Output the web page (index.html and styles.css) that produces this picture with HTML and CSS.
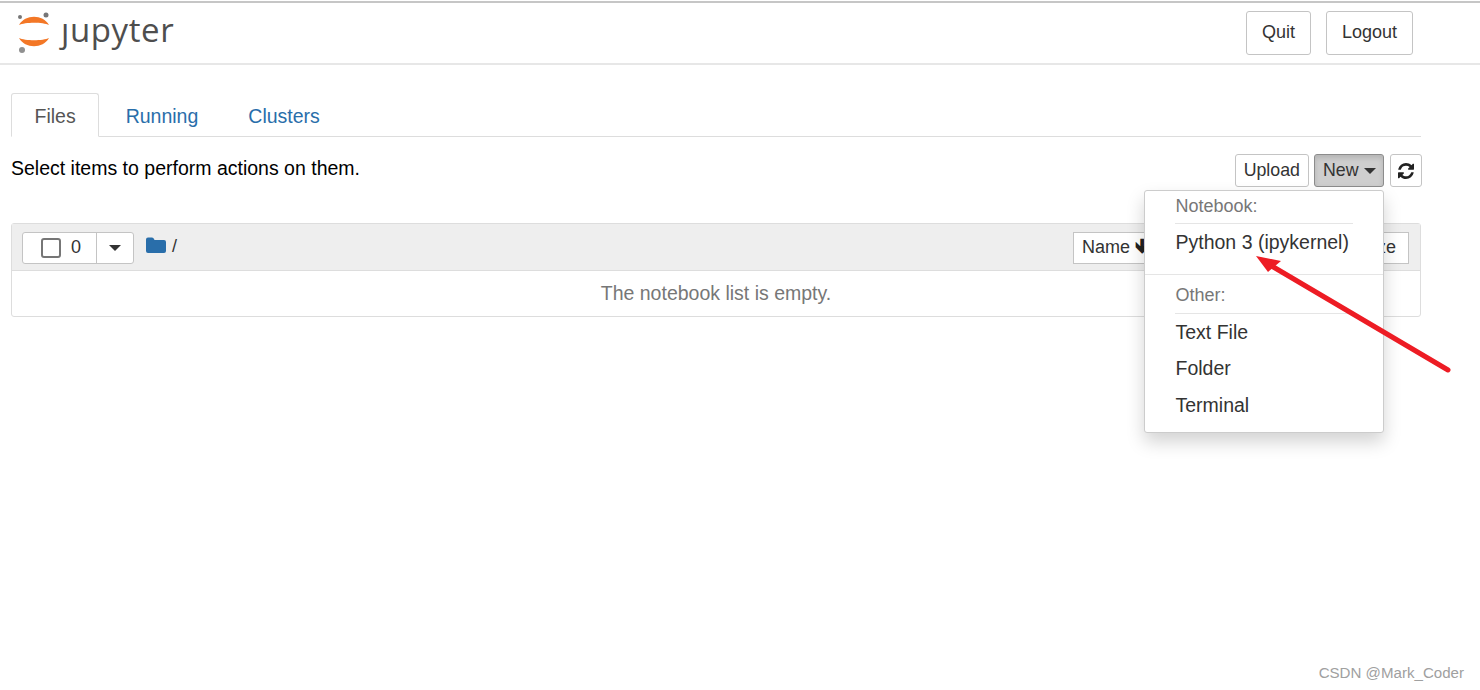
FILE: index.html
```html
<!DOCTYPE html>
<html lang="en">
<head>
    <meta charset="UTF-8">
    <meta name="viewport" content="width=device-width, initial-scale=1.0">
    <title>Home Page - Select or create a notebook</title>
    <link rel="stylesheet" href="styles.css">
</head>
<body>
    <header class="site-header">
        <div class="logo">
            <svg class="logo-mark" width="36" height="44" viewBox="0 0 36 44">
                <circle cx="3" cy="6" r="2" fill="#767677"/>
                <circle cx="29" cy="4" r="2.500" fill="#767677"/>
                <circle cx="5" cy="39" r="3" fill="#909090"/>
                <path d="M2 14 C8 3 26 3 32 14 C26 11 8 11 2 14Z" fill="#f37726"/>
                <path d="M2 27 C8 38 26 38 32 27 C26 30 8 30 2 27Z" fill="#f37726"/>
            </svg>
            <span class="logo-text">&#x237;upyter</span>
        </div>
        <div class="header-buttons">
            <button class="btn btn-header">Quit</button>
            <button class="btn btn-header">Logout</button>
        </div>
    </header>

    <main class="container">
        <nav class="tabs">
            <a class="tab active">Files</a>
            <a class="tab">Running</a>
            <a class="tab">Clusters</a>
        </nav>

        <div class="toolbar">
            <span class="toolbar-text">Select items to perform actions on them.</span>
            <div class="toolbar-buttons">
                <button class="btn btn-small">Upload</button>
                <button class="btn btn-small btn-new">New <span class="caret"></span></button>
                <button class="btn btn-small btn-refresh">
                    <svg width="16" height="16" viewBox="0 0 1536 1536">
                        <path fill="#222" d="M1511 928q0 5-1 7-64 268-268 434.500T764 1536q-146 0-282.500-55T238 1324l-129 129q-19 19-45 19t-45-19-19-45V960q0-26 19-45t45-19h448q26 0 45 19t19 45-19 45l-137 137q71 66 161 102t187 36q134 0 250-65t186-179q11-17 53-117 8-23 30-23h192q13 0 22.500 9.500t9.500 22.500zm25-800v448q0 26-19 45t-45 19h-448q-26 0-45-19t-19-45 19-45l138-138Q969 256 768 256q-134 0-250 65T332 500q-11 17-53 117-8 23-30 23H50q-13 0-22.500-9.500T18 608v-7q65-268 270-434.500T768 0q146 0 284 55.500T1297 212l130-129q19-19 45-19t45 19 19 45z"/>
                    </svg>
                </button>
            </div>
        </div>

        <section class="list">
            <div class="list-header">
                <div class="select-group">
                    <div class="select-box">
                        <span class="checkbox"></span>
                        <span class="count">0</span>
                    </div>
                    <div class="select-caret"><span class="caret"></span></div>
                </div>
                <svg class="folder" width="20" height="16" viewBox="0 0 20 16">
                    <path fill="#296eaa" d="M0 2.500Q0 .5 2 .5h4q1.500 0 2 1.500l.5 1H18q2 0 2 2V14q0 2-2 2H2q-2 0-2-2Z"/>
                </svg>
                <span class="crumb">/</span>
                <div class="sort-buttons">
                    <button class="sort-btn sort-name">Name <span class="sort-arrow">&#x1F87B;</span></button>
                    <button class="sort-btn sort-size">Size</button>
                </div>
            </div>
            <div class="list-empty">The notebook list is empty.</div>
        </section>
    </main>

    <div class="dropdown">
        <div class="dropdown-heading">Notebook:</div>
        <a class="dropdown-item item-first">Python 3 (ipykernel)</a>
        <div class="dropdown-divider"></div>
        <div class="dropdown-heading heading-other">Other:</div>
        <a class="dropdown-item">Text File</a>
        <a class="dropdown-item">Folder</a>
        <a class="dropdown-item">Terminal</a>
    </div>

    <!-- red annotation arrow on top of the menu -->
    <svg class="annotation" width="1480" height="690" viewBox="0 0 1480 690">
        <line x1="1448" y1="370" x2="1270" y2="265" stroke="#ed1c24" stroke-width="5" stroke-linecap="round"/>
        <polygon points="1256,256 1281,261 1268,272" fill="#ed1c24"/>
    </svg>

    <div class="watermark">CSDN @Mark_Coder</div>
</body>
</html>
```

FILE: styles.css
```css
* { box-sizing: border-box; }
html, body { height: 100%; }
body { margin: 0; font-family: "Liberation Sans", Arial, sans-serif; font-size: 19.5px; color: #000; background: #fff; overflow: hidden; }

.site-header { height: 64px; margin-top: 1px; border-top: 2px solid #c6c6c6; border-bottom: 2px solid #e7e7e7; padding: 0 67px 0 17px; display: flex; justify-content: space-between; align-items: flex-start; }
.logo { display: flex; align-items: flex-start; padding-top: 8px; }
.logo-mark { display: block; }
.logo-text { font-family: "Open Sans", "DejaVu Sans", sans-serif; font-size: 33px; line-height: 38px; color: #4e4e4e; margin-left: 8px; letter-spacing: 0.6px; }
.header-buttons { display: flex; gap: 15px; padding-top: 8px; }

.btn { font-family: inherit; color: #333; background: #fff; border: 1px solid #c4c4c4; border-radius: 3px; cursor: pointer; }
.btn-header { height: 44px; padding: 0 15px 2px; font-size: 18px; }
.btn-small { height: 33px; padding: 0 8px; font-size: 17.8px; }
.btn-new { width: 70px; background: #cecece; border-color: #8c8c8c; box-shadow: inset 0 3px 5px rgba(0,0,0,.125); white-space: nowrap; }
.btn-refresh { width: 32px; margin-left: 1px; padding: 0; display: flex; align-items: center; justify-content: center; }
.caret { display: inline-block; width: 0; height: 0; vertical-align: middle; border-top: 6px solid #333; border-left: 6px solid transparent; border-right: 6px solid transparent; }

.container { padding: 0 59px 0 11px; }

.tabs { display: flex; margin-top: 28px; height: 44px; border-bottom: 1px solid #ddd; }
.tab { height: 44px; padding: 0 22.5px; margin-right: 3px; line-height: 44px; color: #296eaa; border: 1px solid transparent; }
.tab.active { color: #555; background: #fff; border-color: #ddd; border-bottom-color: #fff; border-radius: 3px 3px 0 0; }

.toolbar { display: flex; justify-content: space-between; margin-top: 17px; height: 33px; margin-right: -1px; }
.toolbar-text { line-height: 28px; }
.toolbar-buttons { display: flex; gap: 5px; }

.list { margin-top: 36px; border: 1px solid #ddd; border-radius: 3px; }
.list-header { height: 47px; background: #eee; border-bottom: 1px solid #ddd; display: flex; align-items: flex-start; padding: 8px 11px 0 10px; }
.select-group { display: flex; width: 112px; height: 32px; background: #fff; border: 1px solid #c4c4c4; border-radius: 3px; }
.select-box { width: 74px; display: flex; align-items: center; padding-left: 18px; border-right: 1px solid #c4c4c4; }
.checkbox { width: 20px; height: 20px; border: 2px solid #767676; border-radius: 3px; background: #fff; }
.count { margin: -2px 0 0 10px; font-size: 18px; color: #333; }
.select-caret { flex: 1; display: flex; align-items: center; justify-content: center; }
.folder { margin: 5px 0 0 12px; }
.crumb { margin-left: 6px; line-height: 28px; color: #333; font-size: 18px; }
.sort-buttons { margin-left: auto; display: flex; }
.sort-btn { height: 32px; background: #fff; border: 1px solid #c4c4c4; font-family: inherit; font-size: 18px; line-height: 1; color: #333; padding: 0 8px 2px; white-space: nowrap; }
.sort-name { width: 84px; text-align: left; }
.sort-arrow { font-family: "DejaVu Sans", sans-serif; font-weight: bold; font-size: 20px; line-height: 0; color: #222; }
.sort-size { width: 252px; padding-right: 12px; text-align: right; }
.list-empty { height: 45px; line-height: 44px; text-align: center; color: #777; }

.dropdown { position: absolute; left: 1144px; top: 190px; width: 240px; height: 243px; background: #fff; border: 1px solid #ccc; border-radius: 3px; box-shadow: 0 9px 18px rgba(0,0,0,.175); padding-top: 3px; }
.dropdown-heading { margin: 0 30px; padding-left: 0.5px; height: 30px; line-height: 24px; font-size: 18px; color: #777; border-bottom: 1px solid #e5e5e5; }
.heading-other { line-height: 22px; }
.dropdown-item { display: block; padding: 0 30px 0 30.5px; height: 36.5px; line-height: 36px; color: #333; }
.item-first { height: 50px; }
.dropdown-divider { height: 1px; background: #e5e5e5; margin-bottom: 8.5px; }

.annotation { position: absolute; left: 0; top: 0; pointer-events: none; }
.watermark { position: absolute; right: 16px; top: 664px; font-size: 15.1px; color: #a0a0a0; }
```
